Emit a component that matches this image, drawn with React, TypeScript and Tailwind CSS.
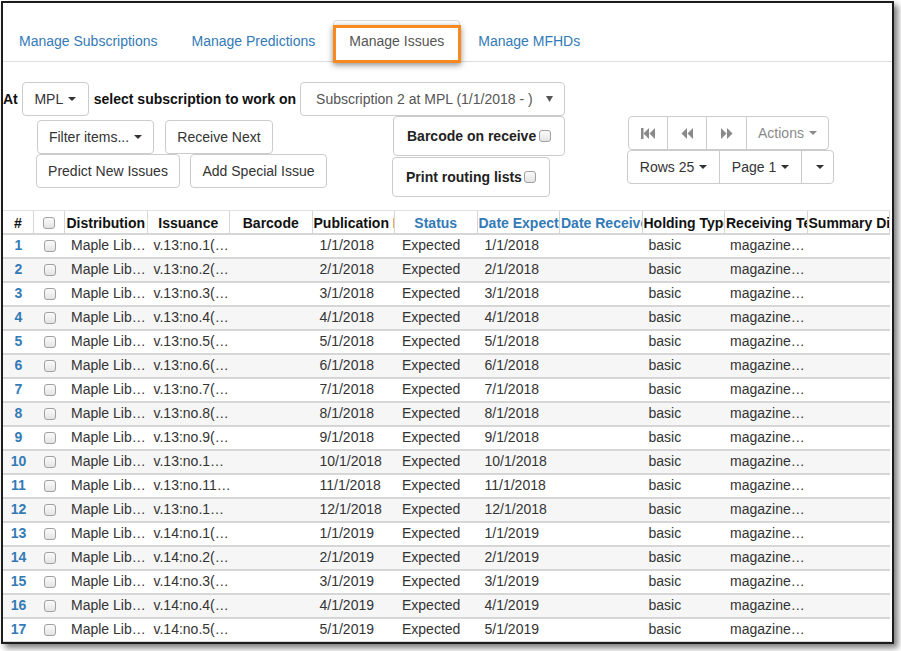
import React from "react";

const Caret = ({ cls = "border-t-[#333]" }: { cls?: string }) => (
  <span
    className={`inline-block w-0 h-0 ml-[5px] align-middle border-t-[4px] border-x-[4px] border-x-transparent ${cls}`}
  />
);

const Btn = ({ children, w }: { children: React.ReactNode; w: string }) => (
  <div
    className={`${w} h-[34px] flex items-center justify-center border border-[#ccc] rounded-[4px] bg-white text-[#333] text-[14px]`}
  >
    {children}
  </div>
);

const Check = () => (
  <span className="inline-block w-[12px] h-[12px] rounded-[3px] border border-[#a0a0a0] bg-[linear-gradient(#fafafa,#e4e4e4)] align-middle" />
);

const FirstIcon = () => (
  <svg width="14" height="11" viewBox="0 0 14 11" fill="#8a8a8a">
    <rect x="0" y="0" width="2.5" height="11" />
    <polygon points="8,0 2.5,5.5 8,11" />
    <polygon points="14,0 8.5,5.5 14,11" />
  </svg>
);
const PrevIcon = () => (
  <svg width="12" height="11" viewBox="0 0 12 11" fill="#8a8a8a">
    <polygon points="6,0 0.5,5.5 6,11" />
    <polygon points="12,0 6.5,5.5 12,11" />
  </svg>
);
const NextIcon = () => (
  <svg width="12" height="11" viewBox="0 0 12 11" fill="#8a8a8a">
    <polygon points="0,0 5.5,5.5 0,11" />
    <polygon points="6,0 11.5,5.5 6,11" />
  </svg>
);

type Row = { n: number; iss: string; pub: string };

const rows: Row[] = [
  { n: 1, iss: "v.13:no.1(…", pub: "1/1/2018" },
  { n: 2, iss: "v.13:no.2(…", pub: "2/1/2018" },
  { n: 3, iss: "v.13:no.3(…", pub: "3/1/2018" },
  { n: 4, iss: "v.13:no.4(…", pub: "4/1/2018" },
  { n: 5, iss: "v.13:no.5(…", pub: "5/1/2018" },
  { n: 6, iss: "v.13:no.6(…", pub: "6/1/2018" },
  { n: 7, iss: "v.13:no.7(…", pub: "7/1/2018" },
  { n: 8, iss: "v.13:no.8(…", pub: "8/1/2018" },
  { n: 9, iss: "v.13:no.9(…", pub: "9/1/2018" },
  { n: 10, iss: "v.13:no.1…", pub: "10/1/2018" },
  { n: 11, iss: "v.13:no.11…", pub: "11/1/2018" },
  { n: 12, iss: "v.13:no.1…", pub: "12/1/2018" },
  { n: 13, iss: "v.14:no.1(…", pub: "1/1/2019" },
  { n: 14, iss: "v.14:no.2(…", pub: "2/1/2019" },
  { n: 15, iss: "v.14:no.3(…", pub: "3/1/2019" },
  { n: 16, iss: "v.14:no.4(…", pub: "4/1/2019" },
  { n: 17, iss: "v.14:no.5(…", pub: "5/1/2019" },
];

const headers: { label: string; blue?: boolean }[] = [
  { label: "Distribution" },
  { label: "Issuance" },
  { label: "Barcode" },
  { label: "Publication Date" },
  { label: "Status", blue: true },
  { label: "Date Expected", blue: true },
  { label: "Date Received", blue: true },
  { label: "Holding Type" },
  { label: "Receiving Template" },
  { label: "Summary Display" },
];

export default function App() {
  const grid = "grid grid-cols-[31px_31px_repeat(10,minmax(0,1fr))] w-[887px]";
  return (
    <div className="w-[901px] h-[651px] bg-white pt-[1px] pl-[1px] font-['Liberation_Sans',Arial,sans-serif] text-[14px] text-[#333]">
      <div className="w-[893px] h-[643px] border-2 border-[#1c1c1c] shadow-[4px_4px_6px_rgba(0,0,0,0.5)] overflow-hidden bg-white">
        {/* Tabs */}
        <div className="flex pt-[17px] border-b border-[#ddd]">
          <div className="px-[15px] py-[10px] leading-[20px] mr-[2px] mb-[-1px] border border-transparent text-[#337ab7]">
            Manage Subscriptions
          </div>
          <div className="px-[15px] py-[10px] leading-[20px] mr-[2px] mb-[-1px] border border-transparent text-[#337ab7]">
            Manage Predictions
          </div>
          <div className="relative px-[15px] py-[10px] leading-[20px] mr-[2px] mb-[-1px] border border-[#ddd] border-b-white rounded-t-[4px] bg-white text-[#555]">
            Manage Issues
            <div className="absolute left-[-1px] right-[-2px] top-[4px] bottom-[-2px] border-[3px] border-[#f7891f] shadow-[0_2px_6px_rgba(0,0,0,0.45)]" />
          </div>
          <div className="px-[15px] py-[10px] leading-[20px] mr-[2px] mb-[-1px] border border-transparent text-[#337ab7]">
            Manage MFHDs
          </div>
        </div>

        {/* At row */}
        <div className="flex items-center h-[34px] mt-[20px]">
          <span className="font-bold text-[#111]">At</span>
          <div className="ml-[4px]">
            <Btn w="w-[67px]">
              MPL
              <Caret />
            </Btn>
          </div>
          <span className="font-bold text-[#111] ml-[5px]">select subscription to work on</span>
          <div className="ml-[4px] w-[265px] h-[34px] border border-[#ccc] rounded-[4px] flex items-center pl-[15px] pr-[11px] text-[#555]">
            <span className="flex-1">Subscription 2 at MPL (1/1/2018 - )</span>
            <svg width="7" height="6" viewBox="0 0 7 6" fill="#555">
              <polygon points="0,0 7,0 3.5,6" />
            </svg>
          </div>
        </div>

        {/* Controls block */}
        <div className="flex items-start">
          <div className="ml-[33px] mt-[4px] flex flex-col">
            <div className="flex gap-[11px] pl-[1px]">
              <Btn w="w-[117px]">
                Filter items...
                <Caret />
              </Btn>
              <Btn w="w-[108px]">Receive Next</Btn>
            </div>
            <div className="flex gap-[10px]">
              <Btn w="w-[144px]">Predict New Issues</Btn>
              <Btn w="w-[137px]">Add Special Issue</Btn>
            </div>
          </div>

          <div className="ml-[65px] flex flex-col">
            <div className="ml-[1px] w-[172px] h-[40px] border border-[#ccc] rounded-[4px] flex items-center justify-between px-[13px]">
              <span className="font-bold text-[#222]">Barcode on receive</span>
              <Check />
            </div>
            <div className="mt-[1px] w-[158px] h-[40px] border border-[#ccc] rounded-[4px] flex items-center justify-between px-[13px]">
              <span className="font-bold text-[#222]">Print routing lists</span>
              <Check />
            </div>
          </div>

          <div className="ml-[62px] flex flex-col">
            <div className="ml-[1px] flex h-[34px] w-[201px] border border-[#ccc] rounded-[4px] divide-x divide-[#ccc]">
              <div className="w-[39px] flex items-center justify-center">
                <FirstIcon />
              </div>
              <div className="w-[39px] flex items-center justify-center">
                <PrevIcon />
              </div>
              <div className="w-[40px] flex items-center justify-center">
                <NextIcon />
              </div>
              <div className="flex-1 flex items-center justify-center text-[#8a8a8a]">
                Actions
                <Caret cls="border-t-[#8a8a8a]" />
              </div>
            </div>
            <div className="flex h-[34px] w-[207px] border border-[#ccc] rounded-[4px] divide-x divide-[#ccc]">
              <div className="w-[92px] flex items-center justify-center">
                Rows 25
                <Caret />
              </div>
              <div className="w-[82px] flex items-center justify-center">
                Page 1
                <Caret />
              </div>
              <div className="flex-1 flex items-center justify-center">
                <Caret cls="border-t-[#333] ml-0" />
              </div>
            </div>
          </div>
        </div>

        {/* Table */}
        <div className="mt-[13px]">
          <div className={`${grid} border-t border-[#e2e2e2] border-b-2 border-b-[#d6d6d6] h-[25px]`}>
            <div className="border-r border-[#d6d6d6] text-center font-bold text-[#111] leading-[22px] pt-[1px]">#</div>
            <div className="border-r border-[#d6d6d6] flex items-center justify-center">
              <Check />
            </div>
            {headers.map((h) => (
              <div
                key={h.label}
                className={`border-r border-[#d6d6d6] text-center font-bold leading-[22px] pt-[1px] whitespace-nowrap overflow-hidden px-[1px] ${
                  h.blue ? "text-[#337ab7]" : "text-[#111]"
                }`}
              >
                {h.label}
              </div>
            ))}
          </div>
          {rows.map((r) => (
            <div
              key={r.n}
              className={`${grid} h-[24px] border-b-2 border-[#d6d6d6] ${r.n % 2 === 0 ? "bg-[#f6f6f6]" : "bg-white"}`}
            >
              <div className="text-center font-bold text-[#337ab7] leading-[21px]">{r.n}</div>
              <div className="flex items-center justify-center">
                <Check />
              </div>
              <div className="pl-[6px] leading-[21px] whitespace-nowrap overflow-hidden">Maple Lib…</div>
              <div className="pl-[6px] leading-[21px] whitespace-nowrap overflow-hidden">{r.iss}</div>
              <div />
              <div className="pl-[7px] leading-[21px] whitespace-nowrap overflow-hidden">{r.pub}</div>
              <div className="pl-[7px] leading-[21px] whitespace-nowrap overflow-hidden">Expected</div>
              <div className="pl-[7px] leading-[21px] whitespace-nowrap overflow-hidden">{r.pub}</div>
              <div />
              <div className="pl-[6px] leading-[21px] whitespace-nowrap overflow-hidden">basic</div>
              <div className="pl-[5px] leading-[21px] whitespace-nowrap overflow-hidden">magazine…</div>
              <div />
            </div>
          ))}
        </div>
      </div>
    </div>
  );
}
